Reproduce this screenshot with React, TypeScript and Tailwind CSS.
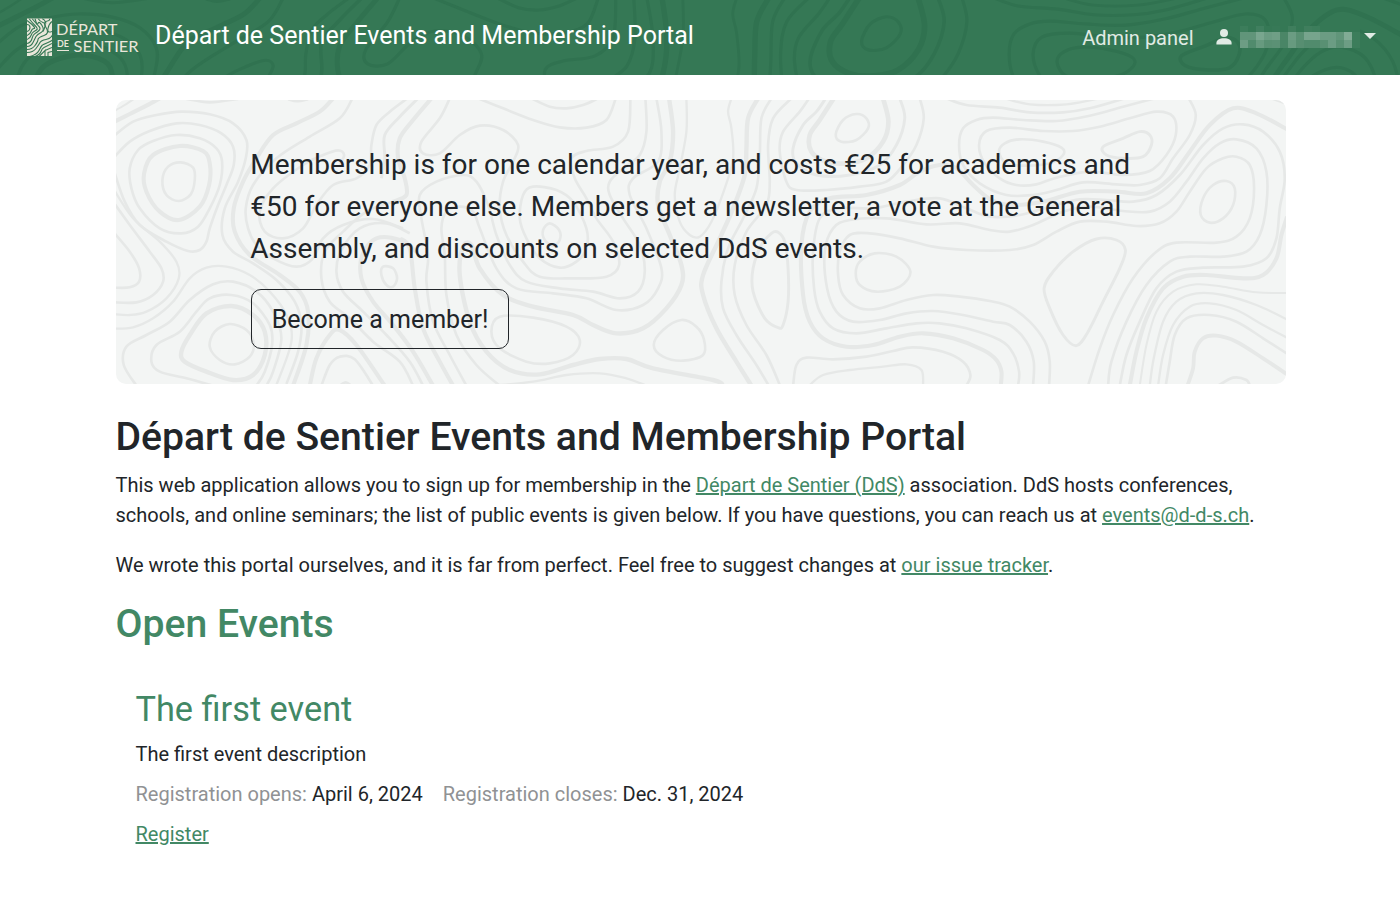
import React from "react";

type Curve = [offset: number, width: number, closed: boolean, points: string];

/* Contour lines of the topographic pattern, in thirds of a pixel. */
const curves: Curve[] = [
  [0, 14, false, "10,82 60,57 110,32 150,10"],
  [0, 7, false, "10,50 45,30 75,10"],
  [0, 9, false, "230,12 300,22 385,12"],
  [0, 10, false, "535,12 562,18 595,12"],
  [0, 9, true, "213,202 250,218 255,255 243,298 207,318 170,300 158,255 175,215"],
  [0, 14, true, "210,153 280,168 300,205 298,270 270,335 207,375 150,350 110,290 103,235 130,180"],
  [0, 9, true, "200,120 270,130 320,160 337,200 330,270 300,340 265,395 215,415 150,400 90,340 65,280 60,220 85,165 130,138"],
  [0, 9, false, "10,190 60,140 120,108 200,85 270,90 335,115 370,155 372,210 350,270 325,330 300,400 290,440 270,465 235,468 170,440 90,390 45,320 12,225"],
  [0, 9, false, "10,125 70,80 140,60 215,50 300,58 370,85 410,135 408,190 385,260 345,340 338,420 370,470 430,505 500,555 555,620 575,690 565,770 530,867"],
  [0, 9, false, "10,410 60,470 88,520 88,560 60,577 10,578"],
  [0, 9, false, "10,320 60,390 120,470 155,520 160,560 130,600 80,622 10,622"],
  [0, 8, false, "10,280 70,370 150,440 200,500 207,550 170,610 110,650 60,660 10,657"],
  [0, 8, false, "10,701 70,697 130,670 190,620 240,550 290,518 350,515 420,540 480,590 530,660 545,740 500,870"],
  [0, 9, false, "80,872 42,810 50,755 110,720 180,680 240,615 310,568 370,560 440,590 490,650 515,730 490,830 470,872"],
  [0, 9, false, "310,872 230,850 150,830 125,800 140,750 210,710 260,650 300,610 365,600 430,625 480,690 487,750 465,830 440,872"],
  [0, 15, true, "365,633 430,660 465,710 465,780 430,840 370,855 290,830 225,800 215,770 240,720 290,655"],
  [0, 9, true, "360,687 410,705 432,745 420,785 375,808 330,795 300,755 315,710"],
  [0, 14, false, "670,10 630,50 560,85 490,120 440,190 400,260 372,340 375,410 420,480 510,540 570,590 595,650 590,750 550,872"],
  [0, 9, false, "728,10 690,70 600,125 500,190 430,270 408,340 415,400 440,450 490,490 560,515 610,490 640,430 700,390 790,372 880,400"],
  [0, 9, false, "893,10 840,50 800,90 785,150 780,210 740,250 670,270 620,330 580,400 520,430 465,410 450,350 490,280 580,210 640,180 685,166 703,180 690,210"],
  [0, 10, false, "925,10 870,65 825,120 825,190 815,250"],
  [0, 14, false, "965,10 910,75 870,130 865,190 885,250 890,300 850,320"],
  [0, 9, false, "850,320 770,350 700,410 645,470 635,550 660,620 720,670 790,740 870,800 910,872"],
  [0, 9, false, "900,415 830,385 750,400 695,465 680,530 700,590 760,650 830,720 900,800 940,872"],
  [0, 14, false, "920,470 870,435 800,430 758,480 755,550 790,620 850,690 910,770 970,872"],
  [0, 9, true, "820,515 850,520 862,550 850,575 830,570 815,540"],
  [0, 14, false, "600,872 620,790 660,720 690,705 740,750 810,850 825,872"],
  [0, 9, false, "635,872 660,810 690,785 735,793 790,872"],
  [0, 9, false, "690,872 708,862 724,872"],
  [870, 9, false, "235,10 310,40 400,75 480,97 560,98 620,75 648,10"],
  [870, 9, false, "395,10 450,35 500,40 550,30 595,10"],
  [870, 9, false, "150,10 120,70 65,140 70,175 120,175 180,120 240,92 310,105 355,150 340,200 310,260 300,340 320,420 370,500 420,545 520,550 620,545 658,510 640,440 590,370 560,310 525,250 515,190 560,168 640,155 685,110 692,10"],
  [870, 9, true, "400,275 470,285 520,320 560,400 560,460 530,500 480,518 420,490 380,430 360,370 370,300"],
  [870, 9, true, "450,385 478,405 480,435 460,452 435,435 430,405"],
  [870, 9, false, "737,10 740,110 720,180 670,220 630,260 630,300 670,370 720,450 735,530 715,590 660,610 580,590 480,580 380,560 330,510 290,420 265,330 230,260 190,240 110,260 60,300 65,370 85,480 80,560 100,680 150,780 200,872"],
  [870, 9, false, "770,10 785,110 775,200 700,250 690,300 740,400 785,520 775,580 730,630 650,645 560,610 460,595 350,580 290,520 240,400 220,350 180,335 140,350 125,400 135,480 140,600 170,720 230,810 300,872"],
  [870, 15, false, "808,10 820,110 810,200 780,260 775,330 810,420 845,510 845,570 800,640 730,700 650,715 580,690 520,660 400,635 310,600 240,520 215,450 190,455 180,540 210,680 260,770 330,825 420,838 520,810 600,792 680,792 760,820 940,855 970,872"],
  [870, 14, false, "0,430 30,460 45,580 70,700 120,800 160,872"],
  [870, 8, false, "860,10 860,110 840,220 825,300 840,380 870,420 900,425 935,380 975,280 1000,190 995,100 985,50 995,10"],
  [870, 9, true, "300,665 400,668 500,695 540,735 520,780 450,805 380,800 300,760 275,710"],
  [870, 9, true, "845,675 890,695 913,735 910,780 850,797 790,785 762,750 790,705"],
  [870, 8, false, "280,872 400,860 500,840 600,835 680,850 740,872"],
  [1770, 9, true, "470,57 500,70 505,100 470,135 425,140 408,118 430,75"],
  [1770, 16, false, "402,10 360,75 330,120 335,170 380,200 440,205 500,190 550,140 566,80 550,10"],
  [1770, 10, false, "600,10 615,70 590,150 540,210 450,240 350,240 290,205 280,160 310,90 350,50 378,10"],
  [1770, 9, false, "660,10 672,70 650,150 610,210 560,260 480,275 380,285 290,285 260,260 240,170 250,110 300,50 328,10"],
  [1770, 15, false, "175,10 145,70 140,160 135,240 100,340 60,430 10,540 10,600 50,700 110,800 155,872"],
  [1770, 9, false, "215,10 185,70 180,180 170,280 130,370 85,460 65,560 70,640 110,720 170,810 207,872"],
  [1770, 9, false, "275,10 220,70 205,150 210,260 200,330 140,410 105,510 105,600 140,690 200,780 241,872"],
  [1770, 10, true, "235,412 255,440 265,520 265,620 250,690 235,698 195,670 160,590 160,520 185,450 215,415"],
  [1770, 14, false, "903,872 905,830 890,795 850,765 760,730 670,715 600,725 520,750 440,755 370,730 330,680 310,600 305,450 330,350 390,310 500,300 600,270 660,230 720,210 770,220 820,270 870,312 930,330 1030,320 1140,290 1250,290 1340,295 1410,250 1470,170 1530,90 1600,40 1670,55 1762,103"],
  [1770, 9, false, "955,872 958,830 940,775 900,735 800,700 720,685 650,685 560,700 470,715 400,700 360,650 343,580 340,470 360,370 420,340 520,340 620,320 720,310 800,340 870,365 960,360 1060,332 1140,313 1220,315 1300,320 1370,300 1440,240 1510,150 1570,100 1630,88 1690,110 1740,170 1755,250 1740,340 1730,430 1700,490 1630,515 1510,518 1430,530 1370,580 1320,680 1280,780 1260,872"],
  [1770, 9, false, "1000,872 1002,800 980,740 930,690 880,680 790,660 700,648 620,655 540,675 460,680 410,650 382,580 375,470 400,400 450,375 560,370 680,388 780,385 870,405 930,410 1000,390 1090,350 1170,335 1270,348 1350,350 1410,320 1460,260 1510,190 1560,145 1610,133 1670,160 1700,230 1700,330 1680,420 1640,470 1570,485 1470,485 1410,500 1340,570 1280,680 1235,800 1225,872"],
  [1770, 9, false, "1048,872 1050,800 1035,740 990,680 930,635 870,618 780,605 700,600 620,615 540,640 480,640 430,600 415,540 420,470 450,420 510,415 600,430 700,455 800,465 930,465 1000,450 1070,410 1140,380 1220,380 1310,393 1380,385 1430,350 1470,290 1520,220 1570,190 1610,185 1650,210 1663,280 1650,370 1610,425 1550,443 1430,443 1370,470 1300,550 1240,660 1200,760 1165,872"],
  [1770, 9, true, "525,475 590,485 632,530 600,575 530,590 480,570 468,535 480,500"],
  [1770, 9, false, "280,872 290,810 320,788 400,793 500,785 580,768 640,757 730,770 790,800 812,840 800,872"],
  [1770, 8, false, "328,872 370,840 450,825 550,815 620,808 665,825 670,872"],
  [1770, 9, false, "740,10 800,30 900,38 990,52 1090,52 1170,40 1275,10"],
  [2640, 8, false, "45,10 120,28 230,28 330,10"],
  [2640, 9, true, "530,180 558,120 550,65 500,50 420,70 330,95 250,108 160,108 60,98 -10,108 -32,150 -15,205 30,250 80,270 140,268 200,248 300,230 400,240 480,228"],
  [2640, 9, false, "597,10 618,60 600,120 550,190 510,250 450,270 380,268 280,262 200,285 130,300 50,300 -30,265 -80,210 -92,150 -80,100 -40,75 10,68 100,75 200,78 300,62 400,35 495,10"],
  [2640, 9, true, "90,133 160,140 215,158 220,180 180,205 110,212 50,205 28,170 45,145"],
  [2640, 10, true, "340,155 400,130 450,110 480,120 485,150 460,185 400,190 350,180"],
  [2640, 9, true, "710,258 735,280 730,330 700,370 660,383 633,360 640,310 670,270"],
  [2640, 10, true, "320,432 380,435 407,465 390,520 340,620 295,710 260,752 220,720 180,640 163,580 190,530 250,470"],
  [2640, 14, false, "892,365 875,420 860,490 820,540 760,550 650,540 580,545 520,580 470,670 440,770 420,872"],
  [2640, 7, false, "895,594 800,592 700,575 620,568 550,590 500,650 470,750 450,872"],
  [2640, 8, false, "895,675 800,630 700,600 620,595 560,620 520,680 492,790 480,872"],
  [2640, 8, false, "895,730 820,690 740,645 660,625 600,635 550,690 520,780 505,872"],
  [2640, 9, false, "895,778 820,730 740,680 660,660 590,670 555,720 540,800 528,872"],
  [2640, 13, false, "895,840 820,790 740,740 680,722 640,730 615,770 610,820 593,872"],
  [2640, 10, false, "685,872 730,848 770,855 780,872"],
  [2640, 9, false, "845,10 895,28"],
];

function smoothPath(points: string, offset: number, closed: boolean): string {
  const p = points.split(" ").map((s) => {
    const [x, y] = s.split(",").map(Number);
    return [x + offset, y];
  });
  const n = p.length;
  const at = (i: number) => (closed ? p[(i + n) % n] : p[Math.max(0, Math.min(n - 1, i))]);
  let d = `M${p[0][0]} ${p[0][1]}`;
  const last = closed ? n : n - 1;
  for (let i = 0; i < last; i++) {
    const [a, b, c, e] = [at(i - 1), at(i), at(i + 1), at(i + 2)];
    d += `C${b[0] + (c[0] - a[0]) / 6} ${b[1] + (c[1] - a[1]) / 6} ${c[0] - (e[0] - b[0]) / 6} ${c[1] - (e[1] - b[1]) / 6} ${c[0]} ${c[1]}`;
  }
  return closed ? d + "Z" : d;
}

function Contours({ height, color }: { height: number; color: string }) {
  return (
    <svg
      className="absolute inset-0 h-full w-full"
      viewBox={`18 15 3510 ${height}`}
      preserveAspectRatio="xMidYMin slice"
      fill="none"
      stroke={color}
      aria-hidden="true"
    >
      {curves.map(([offset, width, closed, points], i) => (
        <path key={i} strokeWidth={width * 0.88} d={smoothPath(points, offset, closed)} />
      ))}
    </svg>
  );
}

const grain = [
  "M0 34Q6 34 9 30T13 24T19 21T25 17",
  "M0 31Q5 31 8 27T11 21T17 17T19 9T22 2L23 0",
  "M0 28Q4 28 6 24T9 18T14 14T15 7T11 5T8 0",
  "M0 25Q4 24 5 20T8 15T12 12T12 8T5 0",
  "M0 21Q3 20 4 17T7 13T10 11T8 7T2 0",
  "M0 17Q3 16 4 13T7 10T5 6L0 2",
  "M0 13Q3 12 3 9T0 6",
  "M3 38Q10 36 12 32T15 27T21 24T25 21",
  "M8 38Q13 36 14 33T17 29T25 25",
  "M12 38L18 32V38M18 32L25 29M21 38V34L25 33",
  "M25 13Q20 15 21 10T25 3",
  "M11 0Q13 3 16 4T18 8T16 13",
  "M15 0Q18 1 19 5",
];

function Logo() {
  return (
    <svg className="block h-[40px] w-[114px]" viewBox="26 17 114 40" fill="#e9e6da">
      <clipPath id="mark">
        <rect width="25" height="38" />
      </clipPath>
      <rect x="27" y="18.5" width="25" height="37.5" />
      <g transform="translate(27 18.5)" clipPath="url(#mark)" fill="none" stroke="#357855" strokeWidth="1.1">
        {grain.map((d) => (
          <path key={d} d={d} />
        ))}
      </g>
      <g fontFamily="Lato, sans-serif" fontWeight="400">
        <text x="56" y="35.3" fontSize="16" textLength="61.5" lengthAdjust="spacingAndGlyphs">DÉPART</text>
        <text x="57" y="47.4" fontSize="10" fontWeight="700" textLength="12" lengthAdjust="spacingAndGlyphs">DE</text>
        <text x="73.5" y="51.6" fontSize="16" textLength="65" lengthAdjust="spacingAndGlyphs">SENTIER</text>
      </g>
      <rect x="57" y="50" width="12" height="1" />
    </svg>
  );
}

const mosaic = [
  [0.04, 0, 0.06, 0, 0.01, 0, 0.05, 0, 0.05, 0.04, 0, 0, 0, 0, 0],
  [0.22, 0.22, 0.34, 0.27, 0.29, 0.11, 0.27, 0.18, 0.33, 0.33, 0.27, 0.27, 0.22, 0.38, 0.04],
  [0.28, 0.14, 0.25, 0.18, 0.19, 0.1, 0.25, 0.17, 0.14, 0.14, 0.18, 0.27, 0.18, 0.28, 0.04],
];

function HiddenName() {
  return (
    <svg className="block h-[22px] w-[120px]" viewBox="0 0 120 22" shapeRendering="crispEdges">
      <rect width="120" height="22" fill="#357855" />
      {mosaic.map((row, r) =>
        row.map((o, c) => (
          <rect key={`${r}-${c}`} x={c * 8} y={[0, 6, 14][r]} width="8" height={r === 0 ? 6 : 8} fill="#fff" opacity={o} />
        )),
      )}
    </svg>
  );
}

function Link({ children }: { children: React.ReactNode }) {
  return <a href="#" className="text-[#428865] underline">{children}</a>;
}

export default function App() {
  return (
    <div className="min-h-[904px] bg-white font-[Roboto,sans-serif] text-[20px] leading-[30px] text-[#212529]">
      <header className="relative h-[75px] overflow-hidden bg-[#357855]">
        <Contours height={188} color="#307250" />
        <div className="relative flex h-full items-start pl-[26px]">
          <div className="pt-[17px]"><Logo /></div>
          <span className="ml-[15px] pt-[17px] text-[25px] leading-[38px] text-white">
            Départ de Sentier Events and Membership Portal
          </span>
          <nav className="ml-auto flex pr-[24px] text-[#e1ebe5]">
            <span className="mr-[22.5px] pt-[23px]">Admin panel</span>
            <svg className="mt-[29px] h-[16px] w-[16px]" viewBox="0 0 16 16" fill="currentColor">
              <circle cx="8" cy="4" r="4" />
              <path d="M0.4 15.5V14C0.4 11 3.5 9.2 8 9.2S15.6 11 15.6 14V15.5Z" />
            </svg>
            <div className="ml-[8px] pt-[26px]"><HiddenName /></div>
            <svg className="mt-[33px] ml-[4px] h-[6px] w-[12px]" viewBox="0 0 12 6" fill="currentColor">
              <path d="M0 0H12L6 6Z" />
            </svg>
          </nav>
        </div>
      </header>

      <main className="ml-[115.5px] w-[1170px] pt-[25px]">
        <section className="relative ml-[0.5px] h-[284px] overflow-hidden rounded-[10px] bg-[#f3f5f4]">
          <Contours height={852} color="#e6e8e7" />
          <div className="relative px-[135px] pt-[44px]">
            <p className="ml-[-0.7px] text-[28px] leading-[42px]">
              Membership is for one calendar year, and costs €25 for academics and
              <br />
              €50 for everyone else. Members get a newsletter, a vote at the General
              <br />
              Assembly, and discounts on selected DdS events.
            </p>
            <button className="mt-[19px] h-[60px] w-[258px] rounded-[10px] border border-[#212529] pt-[2px] text-[25px]">
              Become a member!
            </button>
          </div>
        </section>

        <h1 className="mt-[29px] text-[39.15px] leading-[48px] font-medium">
          Départ de Sentier Events and Membership Portal
        </h1>
        <p className="mt-[9px]">
          This web application allows you to sign up for membership in the <Link>Départ de Sentier (DdS)</Link> association. DdS hosts conferences,
          <br />
          schools, and online seminars; the list of public events is given below. If you have questions, you can reach us at <Link>events@d-d-s.ch</Link>.
        </p>
        <p className="mt-[20px]">
          We wrote this portal ourselves, and it is far from perfect. Feel free to suggest changes at <Link>our issue tracker</Link>.
        </p>
        <h2 className="mt-[20px] text-[39.15px] leading-[48px] font-medium text-[#428865]">Open Events</h2>
        <article className="mt-[40px] pl-[20px]">
          <h3 className="text-[34.3px] leading-[42px] text-[#428865]">The first event</h3>
          <p className="mt-[9px]">The first event description</p>
          <p className="mt-[10px] flex gap-[20px]">
            <span><span className="text-[#909294]">Registration opens:</span> April 6, 2024</span>
            <span><span className="text-[#909294]">Registration closes:</span> Dec. 31, 2024</span>
          </p>
          <p className="mt-[10px]"><Link>Register</Link></p>
        </article>
      </main>
    </div>
  );
}
